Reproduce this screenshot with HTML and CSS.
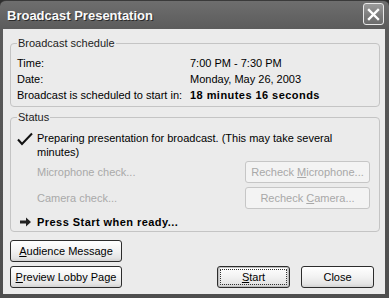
FILE: index.html
```html
<!DOCTYPE html>
<html>
<head>
<meta charset="utf-8">
<link rel="stylesheet" href="styles.css">
</head>
<body>
<div class="window">
  <div class="titlebar">
    <span class="title">Broadcast Presentation</span>
    <span class="xbtn"><svg width="13" height="13" viewBox="0 0 13 13"><path d="M2 2 L11 11 M11 2 L2 11" stroke="#fff" stroke-width="2.4" stroke-linecap="square"/></svg></span>
  </div>
  <div class="client">
    <fieldset class="group sched">
      <legend>Broadcast schedule</legend>
      <div class="grid">
        <span>Time:</span><span>7:00 PM - 7:30 PM</span>
        <span>Date:</span><span>Monday, May 26, 2003</span>
        <span>Broadcast is scheduled to start in:</span><span class="b">18 minutes 16 seconds</span>
      </div>
    </fieldset>
    <fieldset class="group status">
      <legend>Status</legend>
      <div class="srow">
        <svg class="ico" width="16" height="14" viewBox="0 0 16 14"><path d="M1 7.5 L5 12 L15 1.5" fill="none" stroke="#111" stroke-width="2"/></svg>
        <span>Preparing presentation for broadcast. (This may take several minutes)</span>
      </div>
      <div class="crow first">
        <span class="dis">Microphone check...</span>
        <button class="btn wide" disabled>Recheck <u>M</u>icrophone...</button>
      </div>
      <div class="crow">
        <span class="dis">Camera check...</span>
        <button class="btn wide" disabled>Recheck <u>C</u>amera...</button>
      </div>
      <div class="srow ready">
        <svg class="ico arrow" width="16" height="12" viewBox="0 0 16 12"><path d="M3 4.5 H9 V1.5 L14 6 L9 10.5 V7.5 H3 Z" fill="#222"/></svg>
        <span class="b">Press Start when ready...</span>
      </div>
    </fieldset>
    <div class="actions">
      <button class="btn side"><u>A</u>udience Message</button>
      <div class="brow">
        <button class="btn side"><u>P</u>review Lobby Page</button>
        <div class="right">
          <button class="btn small focus"><u>S</u>tart</button>
          <button class="btn small">Close</button>
        </div>
      </div>
    </div>
  </div>
</div>
</body>
</html>
```
FILE: styles.css
```css
html, body {
  margin: 0;
  padding: 0;
  background: #2e2e2e;
}
body {
  font-family: "Liberation Sans", Arial, sans-serif;
  font-size: 11px;
  color: #000;
}
.window {
  width: 389px;
  height: 298px;
  box-sizing: border-box;
  border-radius: 6px 6px 0 0;
  display: flex;
  flex-direction: column;
  padding: 0 4px 4px 3px;
  background: linear-gradient(#6e6e6e, #5a5a5a 30px, #4e4e4e);
  border-top: 1px solid #3a3a3a;
}
.titlebar {
  height: 28px;
  display: flex;
  align-items: center;
  justify-content: space-between;
  padding: 0 1px 0 4px;
}
.title {
  color: #fafafa;
  font-weight: bold;
  font-size: 13px;
  text-shadow: 1px 1px 0 #2a2a2a;
}
.xbtn {
  width: 19px;
  height: 20px;
  border: 1px solid #e8e8e8;
  border-radius: 3px;
  background: linear-gradient(#9a9a9a, #7a7a7a 60%, #6c6c6c);
  display: flex;
  align-items: center;
  justify-content: center;
  margin-top: -2px;
}
.client {
  flex: 1;
  background: #ebebeb;
  padding: 0 5px 0 7px;
  display: flex;
  flex-direction: column;
}
.group {
  border: 1px solid #c4c4c4;
  border-radius: 4px;
  margin: 0;
  padding: 0 9px 0 6px;
  min-width: 0;
}
.group legend {
  padding: 0 1px;
  line-height: 14px;
  color: #222;
}
.sched {
  margin-top: 7px;
  padding-top: 5px;
  padding-bottom: 3px;
}
.grid {
  display: grid;
  grid-template-columns: 173px 1fr;
  line-height: 16px;
}
.b {
  font-weight: bold;
  letter-spacing: 0.45px;
}
.status {
  margin-top: 3px;
  padding-top: 7px;
  padding-bottom: 2px;
}
.srow {
  display: flex;
  gap: 4px;
  line-height: 14px;
}
.ico {
  flex: none;
  margin-top: 1px;
}
.crow {
  display: flex;
  align-items: center;
  justify-content: space-between;
  padding-left: 20px;
  margin-top: 4px;
}
.crow.first {
  margin-top: 2px;
}
.dis {
  color: #a9a9a9;
}
.ready {
  margin-top: 6px;
}
.btn {
  font-family: inherit;
  font-size: 11px;
  height: 22px;
  box-sizing: border-box;
  border: 1px solid #2c2c2c;
  border-radius: 3px;
  background: linear-gradient(#ffffff, #f2f2f2 50%, #e4e4e4 85%, #d2d2d2);
  color: #000;
  padding: 0;
  position: relative;
}
.btn:disabled {
  border-color: #c6c6c6;
  background: #f3f3f3;
  color: #a8a8a8;
}
.wide {
  width: 125px;
}
.side {
  width: 112px;
}
.small {
  width: 73px;
}
.focus {
  box-shadow: inset 0 0 0 1px #bdbdbd, inset 0 -1px 0 2px #d8d8d8;
}
.focus::after {
  content: "";
  position: absolute;
  inset: 2px;
  border: 1px dotted #333;
  border-radius: 1px;
}
.actions {
  display: flex;
  flex-direction: column;
  align-items: flex-start;
  gap: 4px;
  margin-top: 8px;
}
.brow {
  align-self: stretch;
  display: flex;
  justify-content: space-between;
  padding-right: 6px;
}
.right {
  display: flex;
  gap: 11px;
}
```
